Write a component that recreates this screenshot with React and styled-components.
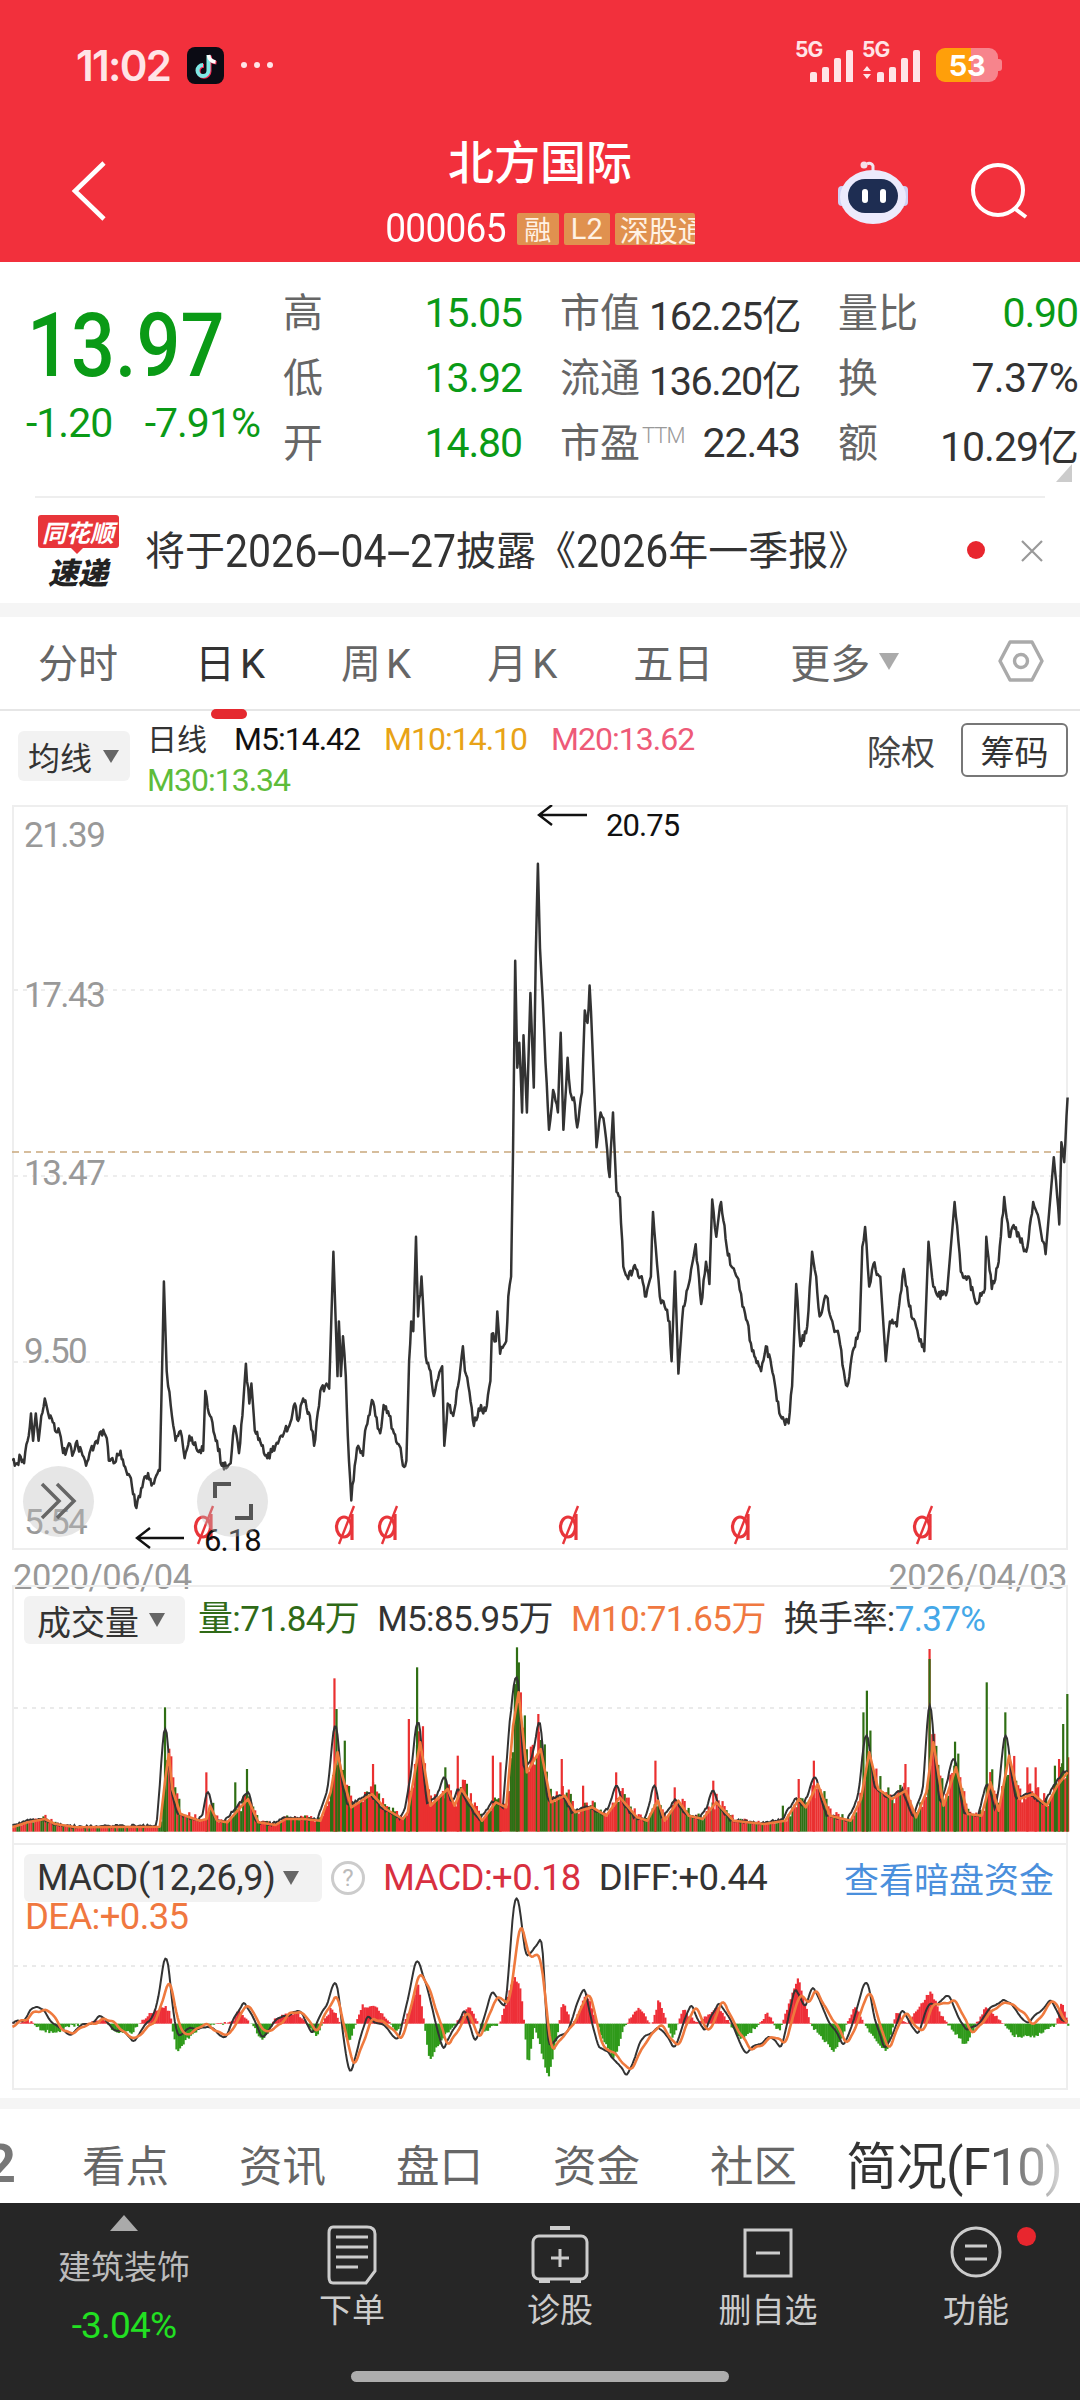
import React from 'react';
import styled, { createGlobalStyle } from 'styled-components';

const Global = createGlobalStyle`
  html, body { margin: 0; padding: 0; background: #fff; }
  body { font-family: Roboto, "Noto Sans CJK SC", sans-serif; }
  * { box-sizing: border-box; }
`;

const Page = styled.div`
  width: 1080px; height: 2400px; overflow: hidden; display: flex; flex-direction: column;
  background: #fff; line-height: 1; color: #333;
`;

/* ---------- header ---------- */
const Header = styled.header`
  height: 262px; background: #f2303c; display: flex; flex-direction: column; flex: none;
`;
const StatusBar = styled.div`
  height: 130px; display: flex; align-items: center; padding: 0 82px 0 76px; flex: none;
`;
const Clock = styled.span`
  font: 600 42px Inter, sans-serif; letter-spacing: -1.7px; color: #ffe4e7; margin-right: 17px;
`;
const Dots = styled.span`
  display: flex; gap: 7px; margin-left: 17px;
  i { width: 6px; height: 6px; border-radius: 50%; background: #ffe4e7; }
`;
const StatusRight = styled.div`
  margin-left: auto; display: flex; align-items: center; gap: 12px;
`;
const Signals = styled.svg`display: block; width: 128px; height: 46px; margin-top: -12px; margin-right: 2px;`;
const Battery = styled.div`
  position: relative; width: 62px; height: 34px; border-radius: 9px; overflow: visible;
  background: linear-gradient(90deg, #ff9f0a 0 35px, #f7848c 35px);
  color: #fff; font: 700 29px Inter, sans-serif; display: flex; align-items: center; justify-content: center;
  letter-spacing: -0.5px; padding-left: 0;
  &::after { content: ''; position: absolute; right: -4px; top: 11px; width: 4px; height: 12px; background: #f7848c; border-radius: 0 3px 3px 0; }
`;
const Nav = styled.div`
  flex: 1; display: grid; grid-template-columns: 1fr auto 1fr; align-items: start;
`;
const NavLeft = styled.div`padding: 30px 0 0 70px;`;
const NavCenter = styled.div`
  display: flex; flex-direction: column; align-items: center; padding-top: 4px;
`;
const NavRight = styled.div`
  display: flex; justify-content: flex-end; gap: 62px; align-items: center; padding: 30px 50px 0 0;
`;
const Title = styled.h1`
  margin: 0; font: 500 46px/50px "Noto Sans CJK SC", sans-serif; color: #fff;
`;
const CodeRow = styled.div`
  display: flex; align-items: center; margin-top: 28px; height: 33px;
`;
const Code = styled.span`
  display: inline-block; transform: scaleY(1.1);
  font: 400 37px Roboto, sans-serif; color: #fff; letter-spacing: -0.7px; margin-right: 11px;
`;
const Badge = styled.span`
  height: 32px; display: flex; align-items: center; justify-content: ${p => p.$clip ? 'flex-start' : 'center'}; background: #e0914f;
  color: #fff2e4; font: 400 ${p => p.$fs || 27}px Roboto, "Noto Sans CJK SC", sans-serif;
  border-radius: 2px; margin-right: 5px; width: ${p => p.$w}px; overflow: hidden; white-space: nowrap;
  padding-left: ${p => p.$clip ? 5 : 0}px;
  &:last-child { margin-right: 0; }
`;

/* ---------- stats ---------- */
const Stats = styled.section`
  height: 234px; display: flex; flex: none; position: relative; border-bottom: 0;
`;
const PriceBlock = styled.div`
  width: 283px; flex: none; padding: 51px 0 0 26px; color: #0a9a16;
`;
const BigPrice = styled.div`
  font: 500 89px/66px Roboto, sans-serif; transform: scaleX(.87); transform-origin: 8px 0; margin-left: 0;
  white-space: nowrap;
`;
const PriceSub = styled.div`
  display: flex; justify-content: space-between; width: 234px; margin-top: 27px;
  font: 400 41px/34px Roboto, sans-serif; letter-spacing: -1px;
`;
const StatGrid = styled.div`
  flex: 1; display: grid; grid-template-columns: 239px 240px 240px; column-gap: 38px;
  grid-auto-rows: 65px; padding-top: 18px; align-content: start;
`;
const StatCell = styled.div`
  display: flex; justify-content: space-between; align-items: center; white-space: nowrap;
`;
const StatLabel = styled.span`
  font: 400 40px "Noto Sans CJK SC", sans-serif; color: #666; margin-bottom: 6px;
  sup { font: 300 22px Roboto, sans-serif; color: #999; vertical-align: 14px; margin-left: 2px; letter-spacing: -1px; }
`;
const StatValue = styled.span`
  font: 400 ${p => p.$fs || 41}px Roboto, "Noto Sans CJK SC", sans-serif; color: ${p => p.$c || '#333'};
  letter-spacing: ${p => p.$ls ?? -1.1}px;
`;
const Corner = styled.div`
  position: absolute; right: 8px; bottom: 14px; width: 0; height: 0;
  border-left: 16px solid transparent; border-bottom: 18px solid #ccc;
`;
const Divider = styled.div`height: 2px; margin: 0 35px; background: #eee; flex: none;`;

const Notice = styled.div`
  height: 105px; display: flex; align-items: center; padding-left: 37px; flex: none; position: relative;
`;
const Logo = styled.div`
  width: 82px; display: flex; flex-direction: column; align-items: center; margin-right: 26px;
`;
const LogoTop = styled.span`
  position: relative; width: 81px; height: 33px; background: #e8353a; border-radius: 3px; color: #fff;
  font: italic 700 24px/33px "Noto Sans CJK SC", sans-serif; text-align: center; white-space: nowrap;
  &::after { content: ''; position: absolute; left: 33px; bottom: -6px; border: 6px solid transparent; border-bottom: 0; border-top-color: #e8353a; }
`;
const LogoBottom = styled.span`
  font: italic 900 30px/32px "Noto Sans CJK SC", sans-serif; color: #222; margin-top: 7px;
`;
const NoticeText = styled.span`
  font: 400 40px "Noto Sans CJK SC", sans-serif; color: #333; white-space: nowrap; margin-bottom: 6px;
`;
const NoticeNum = styled.b`
  display: inline-block; transform: scaleY(1.14); font: 400 41px Roboto, sans-serif;
  i { display: inline-block; font-style: normal; margin: 0 6px; transform: scaleX(2.1); }
`;
const RedDot = styled.i`
  position: absolute; left: 967px; top: 43px; width: 18px; height: 18px; border-radius: 50%; background: #e8262e;
`;
const CloseX = styled.svg`position: absolute; left: 1021px; top: 42px; width: 22px; height: 22px;`;
const Gap = styled.div`height: ${p => p.$h}px; background: #f5f5f5; flex: none; margin-top: ${p => p.$mt || 0}px;`;

/* ---------- period tabs ---------- */
const Tabs = styled.nav`
  height: 94px; display: flex; align-items: center; gap: 71px; padding: 0 0 4px 38px; border-bottom: 2px solid #e6e6e6;
  position: relative; flex: none;
`;
const Tab = styled.span`
  position: relative; font: 400 40px Roboto, "Noto Sans CJK SC", sans-serif; color: ${p => p.$on ? '#333' : '#666'};
  letter-spacing: ${p => p.$ls || 0}px; white-space: nowrap; display: flex; align-items: center;
  margin-right: ${p => p.$mr || 0}px; margin-left: ${p => p.$ml || 0}px;
  ${p => p.$on && `&::after { content: ''; position: absolute; left: 16px; bottom: -29px; width: 36px; height: 10px; border-radius: 5px; background: #e5292f; }`}
`;
const Caret = styled.i`
  width: 0; height: 0; border-style: solid; border-color: ${p => p.$c || '#aaa'} transparent transparent;
  border-width: ${p => p.$s || 17}px ${p => (p.$s || 17) * 0.62}px 0; margin-left: ${p => p.$ml ?? 9}px;
`;
const Hex = styled.svg`position: absolute; left: 997px; top: 22px; width: 48px; height: 44px;`;

/* ---------- MA legend ---------- */
const Legend = styled.div`
  height: 94px; position: relative; display: flex; padding: 20px 0 0 18px; flex: none;
`;
const Dropdown = styled.div`
  display: flex; align-items: center; justify-content: flex-start; height: ${p => p.$h || 50}px; width: ${p => p.$w}px;
  background: #f2f2f2; border-radius: 6px; padding-left: ${p => p.$pl || 10}px; flex: none;
  font: 400 ${p => p.$fs || 32}px Roboto, "Noto Sans CJK SC", sans-serif; color: #333; white-space: nowrap;
  letter-spacing: ${p => p.$ls || 0}px;
`;
const MaValues = styled.div`
  display: flex; flex-wrap: wrap; width: 640px; margin: -5px 0 0 17px; column-gap: 24px; row-gap: 14px;
  align-content: flex-start;
`;
const Ma = styled.span`
  font: 400 ${p => p.$fs || 32}px/27px Roboto, "Noto Sans CJK SC", sans-serif; color: ${p => p.$c};
  letter-spacing: ${p => p.$ls ?? -1}px; white-space: nowrap; flex: none; margin-right: ${p => p.$mr || 0}px;
`;
const MaActions = styled.div`
  position: absolute; right: 12px; top: 12px; display: flex; align-items: center; gap: 26px;
`;
const Plain = styled.span`font: 400 34px "Noto Sans CJK SC", sans-serif; color: #444;`;
const Outline = styled.span`
  width: 107px; height: 54px; border: 2px solid #777; border-radius: 6px; display: flex; align-items: center;
  justify-content: center; font: 400 34px "Noto Sans CJK SC", sans-serif; color: #333;
`;

/* ---------- charts ---------- */
const ChartBox = styled.div`
  position: relative; width: 1056px; height: 745px; margin: 0 0 0 12px; border: 2px solid #eee; flex: none;
`;
const ChartSvg = styled.svg`position: absolute; left: -2px; top: -2px; display: block;`;
const Axis = styled.span`
  position: absolute; left: 10px; top: ${p => p.$t}px; font: 400 35px/30px Roboto, sans-serif; color: #999;
  letter-spacing: -1.5px; transform: translateY(-50%);
`;
const Note = styled.span`
  position: absolute; left: ${p => p.$l}px; top: ${p => p.$t}px; font: 400 31px/30px Roboto, sans-serif; color: #111;
  letter-spacing: -0.9px; transform: translateY(-50%);
`;
const Round = styled.div`
  position: absolute; left: ${p => p.$l}px; top: 659px; width: 71px; height: 71px; border-radius: 50%;
  background: rgba(190,190,190,.38); display: flex; align-items: center; justify-content: center;
`;
const DateRow = styled.div`
  height: 35px; margin: 0 13px 0 13px; display: flex; justify-content: space-between; flex: none;
  font: 400 34.5px/35px Roboto, sans-serif; color: #999; letter-spacing: -0.5px; padding-top: 10px; overflow: visible;
`;
const Panel = styled.section`
  position: relative; width: 1056px; margin-left: 12px; border: 2px solid #eee; border-bottom: ${p => p.$noBottom ? 'none' : '2px solid #eee'};
  height: ${p => p.$h}px; flex: none;
`;
const PanelLegend = styled.div`
  position: relative; display: flex; flex-wrap: wrap; align-items: center; padding: 9px 0 0 10px;
`;
const PLabel = styled.span`
  font: 400 ${p => p.$fs || 35}px/48px Roboto, "Noto Sans CJK SC", sans-serif; color: ${p => p.$c || '#333'}; white-space: nowrap;
  margin-left: ${p => p.$ml || 0}px; letter-spacing: -0.65px;
`;
const Help = styled.i`
  width: 34px; height: 34px; border-radius: 50%; border: 3px solid #ccc; color: #bbb; margin-left: 9px;
  font: normal 400 24px/28px Roboto, sans-serif; text-align: center; flex: none;
`;
const LinkText = styled.span`
  position: absolute; right: 12px; top: 9px; font: 400 35px/48px "Noto Sans CJK SC", sans-serif; color: #4a8fdc; white-space: nowrap;
`;
const DeaRow = styled.div`width: 100%; margin-top: 1px; font: 400 36.5px/28px Roboto, sans-serif; color: #f07840; letter-spacing: -0.65px; padding-left: 1px;`;

/* ---------- bottom tabs ---------- */
const SubTabs = styled.nav`
  height: 94px; display: flex; align-items: center; gap: 70px; flex: none; overflow: hidden; white-space: nowrap; padding-top: 14px;
`;
const SubTab = styled.span`
  font: 400 43.5px "Noto Sans CJK SC", sans-serif; color: #666; flex: none;
`;
const CutTab = styled.span`
  font: 700 54px Roboto, sans-serif; color: #777; margin-left: -15px; margin-right: -4px; flex: none;
`;
const ActiveSub = styled.span`
  font: 400 51px Roboto, "Noto Sans CJK SC", sans-serif; margin-left: -21px; flex: none; letter-spacing: -1px;
  background: linear-gradient(90deg, #333 62%, #999 88%, #ddd 100%); -webkit-background-clip: text; background-clip: text; color: transparent;
`;
const Dock = styled.footer`
  flex: 1; background: #262626; display: flex; flex-direction: column;
`;
const DockRow = styled.div`display: flex; height: 168px; flex: none;`;
const Sector = styled.div`
  width: 248px; display: flex; flex-direction: column; align-items: center; padding-top: 12px; flex: none;
  span { font: 400 33px "Noto Sans CJK SC", sans-serif; color: #bbb; margin-top: 10px; white-space: nowrap; }
  b { font: 400 37px Roboto, sans-serif; color: #22e022; margin-top: 15px; letter-spacing: -0.8px; }
`;
const UpTri = styled.i`
  width: 0; height: 0; border: 14px solid transparent; border-top: 0; border-bottom: 16px solid #aaa;
`;
const DockItem = styled.div`
  width: 208px; display: flex; flex-direction: column; align-items: center; padding-top: 22px; flex: none; position: relative;
  svg { display: block; width: 60px; height: 60px; }
  span { font: 400 33px "Noto Sans CJK SC", sans-serif; color: #ccc; margin-top: -1px; white-space: nowrap; }
`;
const Bubble = styled.i`
  position: absolute; left: 145px; top: 24px; width: 19px; height: 19px; border-radius: 50%; background: #e8262e;
`;
const HomeBar = styled.div`
  width: 378px; height: 11px; border-radius: 6px; background: #adadad; margin: 0 auto; margin-top: 0;
`;

/* ---------- data (traced from the picture; x / y in crop units) ---------- */
const PRICE = [18,1330,25,1335,30,1322,35,1335,40,1290,45,1235,48,1290,52,1235,56,1290,60,1240,65,1205,70,1235,75,1245,80,1270,85,1265,90,1300,95,1318,100,1295,105,1320,110,1295,118,1310,125,1340,130,1315,140,1290,150,1268,155,1285,158,1330,165,1335,175,1310,180,1340,190,1365,198,1425,205,1385,215,1355,220,1380,232,1350,236,1100,238,970,242,1150,248,1220,255,1290,262,1270,268,1325,275,1280,285,1305,295,1310,298,1190,305,1240,315,1290,322,1340,335,1335,340,1260,347,1315,352,1240,357,1135,362,1215,365,1175,370,1270,380,1300,388,1325,400,1300,412,1275,420,1260,428,1215,433,1250,440,1205,450,1240,456,1300,465,1190,472,1180,478,1185,484,910,490,1160,492,1050,495,1160,498,1080,502,1160,505,1280,510,1410,515,1340,520,1300,527,1320,530,1270,535,1240,540,1208,545,1240,552,1275,557,1218,565,1240,572,1275,580,1300,585,1340,590,1330,594,1130,597,1050,600,1070,604,880,607,1040,612,960,618,1120,625,1150,630,1200,636,1165,642,1140,645,1300,650,1215,658,1240,665,1180,672,1100,675,1150,680,1180,688,1260,695,1225,705,1230,712,1170,714,1075,720,1090,722,1030,726,1115,735,1090,738,1000,742,960,745,700,748,325,751,540,754,490,758,630,760,475,765,630,770,390,775,580,778,300,781,130,784,300,788,405,792,530,797,665,803,585,810,630,814,470,818,665,824,520,828,590,833,600,838,660,845,590,849,425,853,450,856,375,860,490,866,700,872,630,878,660,885,760,890,630,895,790,900,800,905,940,912,965,920,940,930,960,938,1000,945,960,948,830,952,900,958,1000,965,1020,972,1050,975,1130,980,950,985,1155,992,1020,1000,975,1010,895,1018,1015,1025,930,1030,975,1034,805,1040,880,1047,810,1055,900,1062,940,1072,965,1078,1020,1085,1050,1092,1110,1105,1150,1112,1100,1120,1140,1128,1210,1135,1245,1145,1255,1150,1180,1156,975,1162,1100,1172,1060,1179,910,1185,960,1190,1040,1200,1000,1210,1060,1218,1080,1225,1150,1230,1180,1238,1110,1248,1070,1252,900,1256,860,1262,980,1268,935,1278,960,1286,1130,1292,1050,1302,1060,1312,945,1320,1020,1330,1060,1342,1110,1348,890,1355,980,1362,1000,1375,990,1386,810,1395,950,1405,960,1418,1015,1430,985,1432,880,1440,985,1450,930,1458,800,1465,880,1470,860,1480,880,1490,910,1500,810,1510,860,1518,915,1530,720,1538,855,1541,690,1545,730,1550,600];
const MA10 = [18,805,40,790,65,780,80,795,110,805,232,803,240,660,245,585,250,690,262,765,290,785,300,780,305,740,315,785,330,790,345,755,360,720,375,790,400,798,415,780,440,780,465,785,480,700,490,580,497,650,510,745,540,705,560,750,585,780,592,760,610,550,625,740,650,690,660,740,670,690,700,785,720,730,735,745,745,500,753,400,765,640,785,570,800,730,820,710,835,760,860,745,880,770,900,715,925,775,940,785,955,725,965,785,985,725,1000,770,1020,780,1040,730,1065,785,1110,795,1140,785,1160,720,1170,745,1187,675,1205,770,1235,785,1250,720,1262,580,1275,690,1295,720,1315,695,1330,775,1345,700,1355,550,1370,740,1388,625,1405,765,1425,770,1438,670,1450,755,1465,590,1480,720,1500,705,1520,740,1535,680,1550,640];
const MA5_PEAKS = [[240,510],[302,700],[350,740],[360,700],[487,500],[607,490],[645,655],[750,355],[783,490],[895,680],[950,680],[1035,695],[1183,655],[1258,530],[1350,440],[1385,600],[1460,530]];
const VOL_SPIKES = [[238,445,0],[298,640,1],[340,670,0],[357,630,0],[484,358,1],[487,450,0],[499,545,0],[540,615,1],[592,480,1],[604,325,0],[645,625,0],[663,590,1],[714,590,1],[725,610,1],[749,265,0],[780,465,1],[814,600,1],[845,680,1],[893,640,1],[950,605,1],[978,685,1],[1034,665,1],[1135,740,0],[1158,660,1],[1180,605,1],[1252,460,0],[1257,395,0],[1313,615,1],[1348,270,1],[1348,300,0],[1385,548,0],[1431,370,0],[1458,460,0],[1490,625,1],[1502,625,1],[1530,620,0],[1536,600,1],[1542,495,0],[1548,405,0]];
const DEA = [18,1400,40,1385,50,1350,70,1355,90,1410,110,1420,150,1375,175,1410,200,1440,225,1385,240,1300,245,1250,255,1360,265,1425,300,1400,335,1430,360,1325,385,1430,420,1365,445,1365,460,1420,480,1340,490,1300,510,1500,515,1530,540,1370,585,1435,610,1240,625,1290,650,1470,680,1350,695,1450,720,1310,740,1340,755,1075,770,1200,785,1190,800,1470,830,1410,855,1290,875,1470,890,1470,915,1545,935,1450,960,1400,985,1460,1010,1340,1030,1420,1050,1325,1090,1480,1120,1430,1140,1460,1160,1300,1175,1340,1185,1290,1230,1460,1262,1295,1290,1470,1315,1360,1340,1420,1355,1340,1385,1320,1410,1420,1462,1320,1500,1395,1530,1325,1545,1380];
const DIFF_PEAKS = [[750,1015],[785,1135],[241,1195],[606,1205],[487,1270],[1258,1270]];
const HIST = [18,1394,40,1385,60,1415,80,1420,100,1400,120,1395,150,1385,165,1420,190,1420,215,1365,238,1340,245,1360,255,1480,270,1440,295,1400,335,1390,345,1355,365,1400,380,1445,400,1375,430,1360,458,1430,480,1345,495,1400,505,1450,525,1340,545,1345,575,1420,595,1350,605,1265,615,1400,622,1505,640,1440,660,1395,680,1345,700,1420,725,1390,745,1250,755,1290,765,1525,775,1400,795,1560,810,1400,815,1325,830,1400,850,1300,870,1420,890,1505,905,1400,925,1345,945,1400,955,1320,975,1440,990,1350,1010,1395,1040,1345,1075,1440,1100,1400,1112,1360,1130,1420,1157,1255,1175,1395,1210,1480,1240,1340,1255,1400,1285,1480,1300,1360,1315,1395,1350,1295,1365,1370,1400,1460,1430,1340,1470,1430,1500,1435,1530,1400,1540,1330,1550,1400];

const SX = 1568 / 1080;
const rng = seed => () => { seed = (seed * 1664525 + 1013904223) % 4294967296; return seed / 4294967296; };
const pairs = a => { const o = []; for (let i = 0; i < a.length; i += 2) o.push([a[i], a[i + 1]]); return o; };
const lerp = (pts, x) => {
  if (x <= pts[0][0]) return pts[0][1];
  for (let i = 1; i < pts.length; i++) if (x <= pts[i][0]) {
    const [a, b] = pts[i - 1], [c, d] = pts[i];
    return b + (d - b) * (x - a) / (c - a || 1);
  }
  return pts[pts.length - 1][1];
};
const path = pts => 'M' + pts.map(p => p[0].toFixed(1) + ' ' + p[1].toFixed(1)).join('L');

const pricePath = () => {
  const r = rng(7), out = [];
  pairs(PRICE).forEach(([zx, zy], i, all) => {
    const x = zx / SX, y = zy / 2.01 + 800;
    if (i) {
      const [px, py] = all[i - 1]; const xp = px / SX, yp = py / 2.01 + 800;
      if (x - xp > 1.5 && Math.abs(y - yp) < 80) {
        const n = Math.max(2, Math.floor((x - xp) / 1.1));
        for (let k = 1; k < n; k++) out.push([xp + (x - xp) * k / n, yp + (y - yp) * k / n + (r() - .5) * 9]);
      }
    }
    out.push([x, y]);
  });
  return path(out);
};

const smooth = (arr, w) => arr.map((_, i) => {
  let s = 0, n = 0;
  for (let k = -w; k <= w; k++) if (arr[i + k] !== undefined) { s += arr[i + k]; n++; }
  return s / n;
});

const volData = () => {
  const ma = pairs(MA10), r = rng(11), bars = [];
  for (let zx = 18; zx <= 1550; zx += 2.9) {
    const h = 818 - lerp(ma, zx);
    const v = h * (0.85 + r() * 0.5);
    bars.push({ x: zx / SX, top: 818 - v, green: r() > 0.6 });
  }
  VOL_SPIKES.forEach(([zx, zy, red]) => bars.push({ x: zx / SX, top: zy, green: !red }));
  const dark = [];
  for (let zx = 18; zx <= 1550; zx += 2) {
    let y = lerp(ma, zx + 5) - (r() - .2) * 8;
    MA5_PEAKS.forEach(([px, py]) => {
      const d = (zx - px) / 6; const g = Math.exp(-d * d);
      y = Math.min(y, y * (1 - g) + py * g);
    });
    dark.push([zx / SX, y]);
  }
  return { bars, dark };
};

const macdData = () => {
  const h = pairs(HIST), de = pairs(DEA), r = rng(5), bars = [];
  for (let zx = 18; zx <= 1550; zx += 2.6) {
    const y = lerp(h, zx) + (r() - .5) * 10;
    bars.push({ x: zx / SX, y });
  }
  const xs = [], base = [];
  for (let zx = 18; zx <= 1550; zx += 2) {
    xs.push(zx);
    base.push(lerp(de, zx) + Math.sin(zx / 7) * 6 + Math.sin(zx / 2.7) * 4);
  }
  const deaS = smooth(base, 2);
  const diff = [];
  xs.forEach(zx => {
    let y = 1394 - (1394 - lerp(de, zx + 6)) * 1.06 + Math.sin(zx / 5) * 7 + (r() - .5) * 5;
    DIFF_PEAKS.forEach(([px, py]) => {
      const d = (zx - px) / 7; const g = Math.exp(-d * d);
      y = Math.min(y, y * (1 - g) + py * g);
    });
    diff.push(y);
  });
  const diffS = smooth(diff, 1);
  return {
    bars,
    diff: xs.map((x, i) => [x / SX, diffS[i]]),
    dea: xs.map((x, i) => [x / SX, deaS[i]]),
  };
};

const Divid = ({ x }) => (
  <g transform={`translate(${x - 12} 1507)`} fill="none" stroke="#e8353a" strokeWidth="3.2">
    <ellipse cx="10" cy="21" rx="7.5" ry="10" />
    <path d="M20 0 L5 38" strokeWidth="2.4" />
    <path d="M18 8 V34" />
  </g>
);

const PriceChart = () => {
  const d = React.useMemo(pricePath, []);
  return (
    <ChartSvg width="1080" height="750" viewBox="12 806 1080 750">
      {[991, 1177, 1363].map(y => <line key={y} x1="14" x2="1064" y1={y} y2={y} stroke="#e8e8e8" strokeWidth="1.5" strokeDasharray="4 5" />)}
      <line x1="12" x2="1068" y1="1153" y2="1153" stroke="#c9a87c" strokeWidth="1.6" strokeDasharray="7 5" />
      <path d={d} fill="none" stroke="#333" strokeWidth="2.5" strokeLinejoin="round" />
      {[205, 346, 389, 570, 742, 924].map(x => <Divid key={x} x={x} />)}
      <path d="M587 816 H540 M552 806 L539 816 L552 826" fill="none" stroke="#111" strokeWidth="2.4" />
      <path d="M184 1539 H138 M150 1529 L137 1539 L150 1549" fill="none" stroke="#111" strokeWidth="2.4" />
    </ChartSvg>
  );
};

const VolChart = () => {
  const { bars, dark } = React.useMemo(volData, []);
  const Y = z => 1560 + z / 3;
  return (
    <ChartSvg width="1080" height="250" viewBox="12 1586 1080 250">
      <line x1="14" x2="1064" y1="1709" y2="1709" stroke="#e4e4e4" strokeWidth="1.5" strokeDasharray="4 5" />
      {bars.map((b, i) => <rect key={i} x={b.x} y={Y(b.top)} width="2.2" height={Y(818) - Y(b.top)} fill={b.green ? '#2f6e14' : '#ea3030'} />)}
      <path d={path(dark.map(([x, z]) => [x, Y(z)]))} fill="none" stroke="#333" strokeWidth="2" />
      <path d={path(pairs(MA10).map(([x, z]) => [x / SX, Y(z)]))} fill="none" stroke="#f07a3c" strokeWidth="2.6" strokeLinejoin="round" />
    </ChartSvg>
  );
};

const MacdChart = () => {
  const { bars, diff, dea } = React.useMemo(macdData, []);
  const Y = z => 1560 + z / 3;
  const z0 = Y(1394);
  return (
    <ChartSvg width="1080" height="250" viewBox="12 1844 1080 250">
      <line x1="14" x2="1064" y1="1967" y2="1967" stroke="#e4e4e4" strokeWidth="1.5" strokeDasharray="4 5" />
      {bars.map((b, i) => {
        const y = Y(b.y);
        return <rect key={i} x={b.x} y={Math.min(y, z0)} width="2.2" height={Math.abs(y - z0)} fill={y < z0 ? '#ee2f38' : '#2f9a1a'} />;
      })}
      <path d={path(diff.map(([x, z]) => [x, Y(z)]))} fill="none" stroke="#333" strokeWidth="2" strokeLinejoin="round" />
      <path d={path(dea.map(([x, z]) => [x, Y(z)]))} fill="none" stroke="#ef7a3e" strokeWidth="2.6" strokeLinejoin="round" />
    </ChartSvg>
  );
};

const Bars = ({ x }) => [[0, 70, 12], [12, 65, 17], [24, 56, 26], [36, 48, 34]].map(([dx, y, h]) => (
  <rect key={dx} x={x + dx} y={y - 38} width="7" height={h} rx="2" fill="#ffe4e7" />
));

const App = () => (
  <Page>
    <Global />
    <Header>
      <StatusBar>
        <Clock>11:02</Clock>
        <svg width="37" height="37" viewBox="0 0 37 37">
          <rect width="37" height="37" rx="8" fill="#0b0b14" />
          <path d="M21.5 8 V23.5 a5.5 5.5 0 1 1 -5.5 -5.5" fill="none" stroke="#ff2b55" strokeWidth="4" transform="translate(1 .8)" />
          <path d="M21.5 8 c.5 4 3 6.5 7 7" fill="none" stroke="#ff2b55" strokeWidth="3.6" transform="translate(1 .8)" />
          <path d="M21.5 8 V23.5 a5.5 5.5 0 1 1 -5.5 -5.5" fill="none" stroke="#7fe9e6" strokeWidth="4" />
          <path d="M21.5 8 c.5 4 3 6.5 7 7" fill="none" stroke="#fff" strokeWidth="3.6" />
        </svg>
        <Dots><i /><i /><i /></Dots>
        <StatusRight>
          <Signals viewBox="0 -4 128 46">
            <text x="1" y="17" fontFamily="Inter" fontWeight="700" fontSize="21" fill="#ffe4e7" letterSpacing="-0.8">5G</text>
            <text x="68" y="17" fontFamily="Inter" fontWeight="700" fontSize="21" fill="#ffe4e7" letterSpacing="-0.8">5G</text>
            <Bars x={16} />
            <Bars x={83} />
            <path d="M69 31 l4 -5 l4 5 z M69 34 l4 5 l4 -5 z" fill="#ffe4e7" />
          </Signals>
          <Battery>53</Battery>
        </StatusRight>
      </StatusBar>
      <Nav>
        <NavLeft>
          <svg width="38" height="62" viewBox="0 0 38 62" fill="none">
            <path d="M34 3 L5 31 L34 59" stroke="#fff" strokeWidth="4.6" />
          </svg>
        </NavLeft>
        <NavCenter>
          <Title>北方国际</Title>
          <CodeRow>
            <Code>000065</Code>
            <Badge $w={42}>融</Badge>
            <Badge $w={46} $fs={29}>L2</Badge>
            <Badge $w={80} $fs={29} $clip>深股通</Badge>
          </CodeRow>
        </NavCenter>
        <NavRight>
          <svg width="70" height="64" viewBox="0 0 70 64">
            <path d="M35 12 V6 a4 4 0 0 0 -6 -2" fill="none" stroke="#f1e6ef" strokeWidth="3" />
            <circle cx="26" cy="5" r="3.5" fill="#f6dfe8" />
            <rect x="0" y="26" width="8" height="20" rx="4" fill="#cfd0f4" />
            <rect x="62" y="26" width="8" height="20" rx="4" fill="#cfd0f4" />
            <ellipse cx="35" cy="37" rx="33" ry="27" fill="#eceafc" />
            <rect x="10" y="19" width="50" height="34" rx="17" fill="#1e2d52" />
            <rect x="24" y="29" width="6" height="14" rx="3" fill="#fff" />
            <rect x="42" y="29" width="6" height="14" rx="3" fill="#fff" />
          </svg>
          <svg width="60" height="58" viewBox="0 0 60 58" fill="none" stroke="#fff" strokeWidth="4">
            <circle cx="28" cy="27" r="25" />
            <path d="M44 45 L56 54" />
          </svg>
        </NavRight>
      </Nav>
    </Header>

    <Stats>
      <PriceBlock>
        <BigPrice>13.97</BigPrice>
        <PriceSub><span>-1.20</span><span>-7.91%</span></PriceSub>
      </PriceBlock>
      <StatGrid>
        <StatCell><StatLabel>高</StatLabel><StatValue $c="#0a9a16">15.05</StatValue></StatCell>
        <StatCell><StatLabel>市值</StatLabel><StatValue $fs={39.5} $ls={-1.4}>162.25亿</StatValue></StatCell>
        <StatCell><StatLabel>量比</StatLabel><StatValue $c="#0a9a16">0.90</StatValue></StatCell>
        <StatCell><StatLabel>低</StatLabel><StatValue $c="#0a9a16">13.92</StatValue></StatCell>
        <StatCell><StatLabel>流通</StatLabel><StatValue $fs={39.5} $ls={-1.4}>136.20亿</StatValue></StatCell>
        <StatCell><StatLabel>换</StatLabel><StatValue $ls={-0.7}>7.37%</StatValue></StatCell>
        <StatCell><StatLabel>开</StatLabel><StatValue $c="#0a9a16">14.80</StatValue></StatCell>
        <StatCell><StatLabel>市盈<sup>TTM</sup></StatLabel><StatValue>22.43</StatValue></StatCell>
        <StatCell><StatLabel>额</StatLabel><StatValue $ls={-1}>10.29亿</StatValue></StatCell>
      </StatGrid>
      <Corner />
    </Stats>
    <Divider />
    <Notice>
      <Logo>
        <LogoTop>同花顺</LogoTop>
        <LogoBottom>速递</LogoBottom>
      </Logo>
      <NoticeText>将于<NoticeNum>2026<i>-</i>04<i>-</i>27</NoticeNum>披露《<NoticeNum>2026</NoticeNum>年一季报》</NoticeText>
      <RedDot />
      <CloseX viewBox="0 0 22 22" fill="none" stroke="#999" strokeWidth="2.2"><path d="M1 1 L21 21 M21 1 L1 21" /></CloseX>
    </Notice>
    <Gap $h={14} />

    <Tabs>
      <Tab $mr={6}>分时</Tab>
      <Tab $on $ls={5}>日K</Tab>
      <Tab $ls={5}>周K</Tab>
      <Tab $ls={5}>月K</Tab>
      <Tab>五日</Tab>
      <Tab $ml={6}>更多<Caret /></Tab>
      <Hex viewBox="0 0 48 44" fill="none" stroke="#aaa" strokeWidth="3.4">
        <path d="M13 3 H35 L45 22 L35 41 H13 L3 22 Z" strokeLinejoin="round" />
        <circle cx="24" cy="22" r="6.5" />
      </Hex>
    </Tabs>

    <Legend>
      <Dropdown $w={112}>均线<Caret $c="#666" $s={13} $ml={11} /></Dropdown>
      <MaValues>
        <Ma $c="#333" $fs={30} $ls={0} $mr={3}>日线</Ma>
        <Ma $c="#111">M5:14.42</Ma>
        <Ma $c="#e8a317">M10:14.10</Ma>
        <Ma $c="#ee5a78">M20:13.62</Ma>
        <Ma $c="#5ebc3a">M30:13.34</Ma>
      </MaValues>
      <MaActions>
        <Plain>除权</Plain>
        <Outline>筹码</Outline>
      </MaActions>
    </Legend>

    <ChartBox>
      <PriceChart />
      <Axis $t={29}>21.39</Axis>
      <Axis $t={189}>17.43</Axis>
      <Axis $t={367}>13.47</Axis>
      <Axis $t={545}>9.50</Axis>
      <Note $l={592} $t={19}>20.75</Note>
      <Axis $t={716}>5.54</Axis>
      <Note $l={190} $t={734}>6.18</Note>
      <Round $l={9}>
        <svg width="42" height="42" viewBox="0 0 42 42" fill="none" stroke="#666" strokeWidth="3.5">
          <path d="M4 3 L21 20 L4 37 M19 3 L36 20 L19 37" />
        </svg>
      </Round>
      <Round $l={183}>
        <svg width="42" height="42" viewBox="0 0 42 42" fill="none" stroke="#555" strokeWidth="4">
          <path d="M3 17 V3 H19 M39 23 V37 H23" />
        </svg>
      </Round>
    </ChartBox>
    <DateRow><span>2020/06/04</span><span>2026/04/03</span></DateRow>

    <Panel $h={258} $noBottom>
      <VolChart />
      <PanelLegend>
        <Dropdown $w={161} $h={48} $fs={34} $pl={13}>成交量<Caret $c="#666" $s={14} $ml={10} /></Dropdown>
        <PLabel $c="#2f6a17" $ml={13}>量:71.84万</PLabel>
        <PLabel $ml={18}>M5:85.95万</PLabel>
        <PLabel $c="#f07840" $ml={18}>M10:71.65万</PLabel>
        <PLabel $ml={18}>换手率:<PLabel as="span" $c="#45a8e8">7.37%</PLabel></PLabel>
      </PanelLegend>
    </Panel>

    <Panel $h={247}>
      <MacdChart />
      <PanelLegend>
        <Dropdown $w={298} $h={48} $fs={36} $pl={13} $ls={-0.3}>MACD(12,26,9)<Caret $c="#666" $s={14} $ml={8} /></Dropdown>
        <Help>?</Help>
        <PLabel $c="#d83040" $ml={18} $fs={36.5}>MACD:+0.18</PLabel>
        <PLabel $ml={18} $fs={36.5}>DIFF:+0.44</PLabel>
        <LinkText>查看暗盘资金</LinkText>
        <DeaRow>DEA:+0.35</DeaRow>
      </PanelLegend>
    </Panel>
    <Gap $h={11} $mt={8} />

    <SubTabs>
      <CutTab>2</CutTab>
      <SubTab>看点</SubTab>
      <SubTab>资讯</SubTab>
      <SubTab>盘口</SubTab>
      <SubTab>资金</SubTab>
      <SubTab>社区</SubTab>
      <ActiveSub>简况(F10)</ActiveSub>
    </SubTabs>

    <Dock>
      <DockRow>
        <Sector>
          <UpTri />
          <span>建筑装饰</span>
          <b>-3.04%</b>
        </Sector>
        <DockItem>
          <svg viewBox="0 0 60 60" fill="none" stroke="#ccc" strokeWidth="3">
            <path d="M11 0 H45 Q53 0 53 7 V44 L44 56 H11 Q7 56 7 50 V6 Q7 0 11 0 Z" transform="translate(0 2)" />
            <path d="M14 12 H46 M14 22 H46 M14 32 H46 M14 42 H36" />
          </svg>
          <span>下单</span>
        </DockItem>
        <DockItem>
          <svg viewBox="0 0 60 60" fill="none" stroke="#ccc" strokeWidth="3">
            <path d="M20 3 H40" strokeWidth="4" />
            <rect x="3" y="11" width="54" height="43" rx="6" />
            <path d="M30 24 V42 M21 33 H39" />
            <path d="M9 56 H20 M40 56 H51" strokeWidth="4" />
          </svg>
          <span>诊股</span>
        </DockItem>
        <DockItem>
          <svg viewBox="0 0 60 60" fill="none" stroke="#ccc" strokeWidth="3">
            <rect x="7" y="5" width="46" height="46" />
            <path d="M18 28 H42" />
          </svg>
          <span>删自选</span>
        </DockItem>
        <DockItem>
          <svg viewBox="0 0 60 60" fill="none" stroke="#ccc" strokeWidth="3">
            <circle cx="30" cy="27" r="24" />
            <path d="M19 21 H41 M19 34 H41" />
          </svg>
          <span>功能</span>
          <Bubble />
        </DockItem>
      </DockRow>
      <HomeBar />
    </Dock>
  </Page>
);

export default App;
